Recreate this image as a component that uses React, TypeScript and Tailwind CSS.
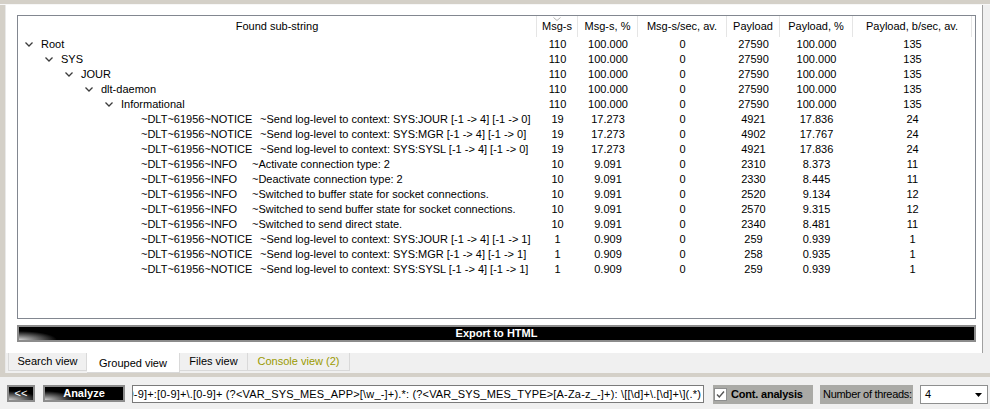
const COLS = [
  { title: "Msg-s", w: "w-[41px]" },
  { title: "Msg-s, %", w: "w-[60px]" },
  { title: "Msg-s/sec, av.", w: "w-[89px]" },
  { title: "Payload", w: "w-[53px]" },
  { title: "Payload, %", w: "w-[73px]" },
  { title: "Payload, b/sec, av.", w: "w-[119px]" },
];

// indent per tree level (20px steps); chevron nodes vs leaf rows
const NODE_PAD = ["pl-[7px]", "pl-[27px]", "pl-[47px]", "pl-[67px]", "pl-[87px]"];

type Row = {
  level: number;
  label?: string;
  head?: string;
  msg?: string;
  notice?: boolean;
  v: string[];
};

const TOP = ["110", "100.000", "0", "27590", "100.000", "135"];

const ROWS: Row[] = [
  { level: 0, label: "Root", v: TOP },
  { level: 1, label: "SYS", v: TOP },
  { level: 2, label: "JOUR", v: TOP },
  { level: 3, label: "dlt-daemon", v: TOP },
  { level: 4, label: "Informational", v: TOP },
  { level: 5, head: "~DLT~61956~NOTICE", notice: true, msg: "~Send log-level to context: SYS:JOUR [-1 -> 4] [-1 -> 0]", v: ["19", "17.273", "0", "4921", "17.836", "24"] },
  { level: 5, head: "~DLT~61956~NOTICE", notice: true, msg: "~Send log-level to context: SYS:MGR [-1 -> 4] [-1 -> 0]", v: ["19", "17.273", "0", "4902", "17.767", "24"] },
  { level: 5, head: "~DLT~61956~NOTICE", notice: true, msg: "~Send log-level to context: SYS:SYSL [-1 -> 4] [-1 -> 0]", v: ["19", "17.273", "0", "4921", "17.836", "24"] },
  { level: 5, head: "~DLT~61956~INFO", msg: "~Activate connection type: 2", v: ["10", "9.091", "0", "2310", "8.373", "11"] },
  { level: 5, head: "~DLT~61956~INFO", msg: "~Deactivate connection type: 2", v: ["10", "9.091", "0", "2330", "8.445", "11"] },
  { level: 5, head: "~DLT~61956~INFO", msg: "~Switched to buffer state for socket connections.", v: ["10", "9.091", "0", "2520", "9.134", "12"] },
  { level: 5, head: "~DLT~61956~INFO", msg: "~Switched to send buffer state for socket connections.", v: ["10", "9.091", "0", "2570", "9.315", "12"] },
  { level: 5, head: "~DLT~61956~INFO", msg: "~Switched to send direct state.", v: ["10", "9.091", "0", "2340", "8.481", "11"] },
  { level: 5, head: "~DLT~61956~NOTICE", notice: true, msg: "~Send log-level to context: SYS:JOUR [-1 -> 4] [-1 -> 1]", v: ["1", "0.909", "0", "259", "0.939", "1"] },
  { level: 5, head: "~DLT~61956~NOTICE", notice: true, msg: "~Send log-level to context: SYS:MGR [-1 -> 4] [-1 -> 1]", v: ["1", "0.909", "0", "258", "0.935", "1"] },
  { level: 5, head: "~DLT~61956~NOTICE", notice: true, msg: "~Send log-level to context: SYS:SYSL [-1 -> 4] [-1 -> 1]", v: ["1", "0.909", "0", "259", "0.939", "1"] },
];

function Chevron() {
  return (
    <svg width="8" height="5" viewBox="0 0 8 5" className="mr-[8px] shrink-0">
      <path d="M0.5 0.5 L4 4 L7.5 0.5" fill="none" stroke="#3c3c3c" strokeWidth="1.3" />
    </svg>
  );
}

function TreeRow({ row }: { row: Row }) {
  return (
    <div className="flex h-[15px] leading-[15px]">
      <div className="flex w-[519px] items-center overflow-hidden whitespace-nowrap">
        {row.label ? (
          <div className={"flex items-center " + NODE_PAD[row.level]}>
            <Chevron />
            <span>{row.label}</span>
          </div>
        ) : (
          <div className="flex pl-[123px]">
            <span className={row.notice ? "w-[119px]" : "w-[111px]"}>{row.head}</span>
            <span>{row.msg}</span>
          </div>
        )}
      </div>
      {COLS.map((c, i) => (
        <div key={c.title} className={c.w + " text-center"}>
          {row.v[i]}
        </div>
      ))}
    </div>
  );
}

function DarkButton({ label, w, bold }: { label: string; w: string; bold?: boolean }) {
  return (
    <div
      className={
        w +
        " flex h-[17px] items-center justify-center border-2 border-[#8c8c8c] bg-[radial-gradient(ellipse_30px_9px_at_0%_100%,#cfcfcf,#000_100%)] leading-none text-white " +
        (bold ? "font-bold" : "")
      }
    >
      {label}
    </div>
  );
}

export default function App() {
  return (
    <div className="flex h-[409px] w-[990px] flex-col overflow-hidden bg-[#f0f0f0] font-['Liberation_Sans',Arial,sans-serif] text-[11px] text-black">
      <div className="h-[4px] shrink-0 bg-[#d4d0c8]" />
      <div className="h-[1px] shrink-0 bg-[#f7f7f7]" />

      <div className="flex h-[368px] shrink-0">
        <div className="w-[6px] shrink-0 border-r border-[#e9e9e9] bg-[#d4d0c8]" />
        <div className="flex flex-1 flex-col">
          {/* tab page */}
          <div className="flex h-[348px] w-[977px] flex-col border-r border-[#a0a0a0] bg-white pl-[11px] pt-[10px]">
            <div className="h-[304px] w-[959px] border border-[#828790] bg-white">
              <div className="flex h-[21px] leading-[21px]">
                <div className="w-[519px] border-r border-[#e5e5e5] text-center">Found sub-string</div>
                {COLS.map((c, i) => (
                  <div key={c.title} className={c.w + " relative whitespace-nowrap border-r border-[#e5e5e5] text-center"}>
                    {i === 0 && (
                      <svg width="8" height="4" viewBox="0 0 8 4" className="absolute left-[16px] top-[1px]">
                        <path d="M0.5 0.5 L4 3.5 L7.5 0.5" fill="none" stroke="#b5b5b5" strokeWidth="1" />
                      </svg>
                    )}
                    {c.title}
                  </div>
                ))}
              </div>
              {ROWS.map((r, i) => (
                <TreeRow key={i} row={r} />
              ))}
            </div>
            <div className="mt-[6px] flex h-[17px] w-[959px] items-center justify-center border-2 border-[#8c8c8c] bg-[radial-gradient(ellipse_38px_9px_at_0%_100%,#d4d4d4,#000_100%)] font-bold leading-none text-white">
              Export to HTML
            </div>
          </div>

          {/* tabs */}
          <div className="flex h-[20px] pl-[2px]">
            <div className="flex h-[18px] w-[79px] items-center justify-center border-x border-b border-[#d9d9d9] bg-[#f0f0f0]">
              Search view
            </div>
            <div className="flex h-[20px] w-[93px] items-center justify-center border-b border-r border-[#d9d9d9] bg-white pt-[2px]">
              Grouped view
            </div>
            <div className="flex h-[18px] w-[68px] items-center justify-center border-b border-r border-[#d9d9d9] bg-[#f0f0f0]">
              Files view
            </div>
            <div className="flex h-[18px] w-[102px] items-center justify-center border-b border-r border-[#d9d9d9] bg-[#f0f0f0] text-[#9a9a00]">
              Console view (2)
            </div>
          </div>
        </div>
      </div>

      <div className="h-[4px] shrink-0 bg-[#d4d0c8]" />

      {/* bottom toolbar */}
      <div className="flex h-[32px] items-start pl-[7px] pt-[8px]">
        <DarkButton label="<<" w="w-[28px]" />
        <div className="ml-[8px]">
          <DarkButton label="Analyze" w="w-[82px]" bold />
        </div>
        <div className="ml-[7px] flex h-[18px] w-[572px] items-center justify-end overflow-hidden whitespace-nowrap border border-[#7a7a7a] bg-white pr-[2px]">
          <span className="tracking-[0.18px]">[0-9]+:[0-9]+\.[0-9]+ (?&lt;VAR_SYS_MES_APP&gt;[\w_-]+).*: (?&lt;VAR_SYS_MES_TYPE&gt;[A-Za-z_-]+): \[[\d]+\.[\d]+\](.*)</span>
        </div>
        <div className="ml-[9px] flex h-[19px] w-[100px] items-center whitespace-nowrap bg-[#aaaaa6] pl-[1px]">
          <svg width="13" height="13" viewBox="0 0 13 13" className="shrink-0">
            <rect x="0.5" y="0.5" width="12" height="12" fill="#fff" stroke="#8e8f8f" />
            <path d="M3 6.5 L5.3 9 L10 3.5" fill="none" stroke="#555" strokeWidth="1.4" />
          </svg>
          <span className="ml-[4px] font-bold tracking-[-0.2px]">Cont. analysis</span>
        </div>
        <div className="ml-[7px] flex h-[19px] w-[93px] items-center overflow-hidden whitespace-nowrap bg-[#aaaaa6] pl-[3px] tracking-[-0.3px]">
          Number of threads:
        </div>
        <div className="ml-[7px] flex h-[19px] w-[68px] items-center justify-between border border-[#8e8f8f] bg-white pl-[4px] pr-[5px]">
          <span>4</span>
          <svg width="7" height="4" viewBox="0 0 7 4">
            <polygon points="0,0 7,0 3.5,4" fill="#000" />
          </svg>
        </div>
      </div>
    </div>
  );
}
